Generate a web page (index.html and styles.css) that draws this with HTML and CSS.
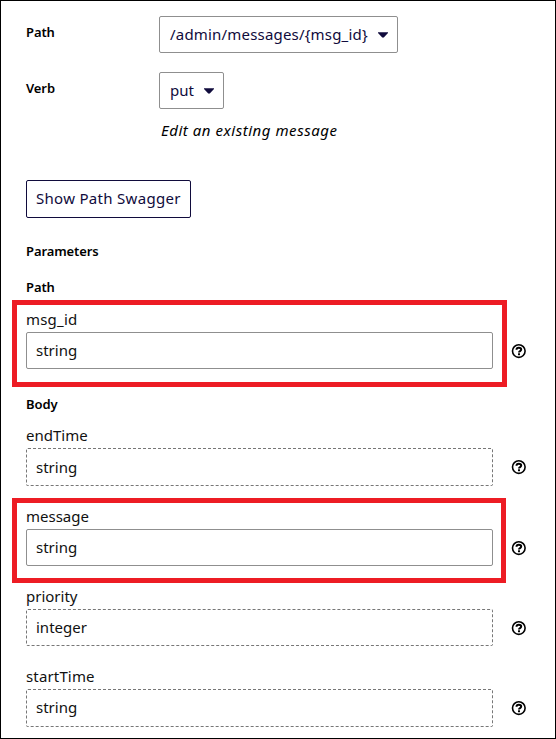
FILE: index.html
```html
<!DOCTYPE html>
<html lang="en">
<head>
<meta charset="utf-8">
<title>Edit message</title>
<link rel="stylesheet" href="styles.css">
</head>
<body>
<svg class="defs" width="0" height="0" aria-hidden="true">
  <symbol id="help" viewBox="0 0 16 16">
    <circle cx="7.8" cy="8.1" r="6.3" fill="none" stroke="currentColor" stroke-width="1.6"/>
    <path d="M5.5 6.8C5.5 5.4 6.5 4.8 7.8 4.8s2.4.6 2.4 1.8c0 1.5-2.2 1.4-2.2 2.9" fill="none" stroke="currentColor" stroke-width="2"/>
    <rect x="7" y="10.3" width="2" height="1.9" fill="currentColor"/>
  </symbol>
  <symbol id="caret" viewBox="0 0 10 6">
    <path d="M0 .3h10v.7L6 5.2q-1 .9-2 0L0 1z" fill="currentColor"/>
  </symbol>
</svg>
<main class="page">
  <div class="row">
    <span class="heading">Path</span>
    <button class="select select-path"><span>/admin/messages/{msg_id}</span><svg class="caret"><use href="#caret"/></svg></button>
  </div>
  <div class="row row-verb">
    <span class="heading">Verb</span>
    <button class="select select-verb"><span>put</span><svg class="caret"><use href="#caret"/></svg></button>
  </div>
  <p class="description">Edit an existing message</p>
  <button class="swagger"><span>Show Path Swagger</span></button>
  <h2 class="heading">Parameters</h2>
  <h3 class="heading heading-path">Path</h3>
  <section class="field required field-id">
    <label class="name name-id">msg_id</label>
    <div class="line"><div class="input">string</div><svg class="help"><use href="#help"/></svg></div>
    <i class="mark mark-id"></i>
  </section>
  <h3 class="heading heading-body">Body</h3>
  <section class="field field-end">
    <label class="name">endTime</label>
    <div class="line"><div class="input tall">string</div><svg class="help"><use href="#help"/></svg></div>
  </section>
  <section class="field required">
    <label class="name">message</label>
    <div class="line"><div class="input">string</div><svg class="help"><use href="#help"/></svg></div>
    <i class="mark mark-message"></i>
  </section>
  <section class="field">
    <label class="name">priority</label>
    <div class="line"><div class="input">integer</div><svg class="help"><use href="#help"/></svg></div>
  </section>
  <section class="field field-start">
    <label class="name name-start">startTime</label>
    <div class="line"><div class="input tall">string</div><svg class="help"><use href="#help"/></svg></div>
  </section>
</main>
</body>
</html>
```
FILE: styles.css
```css
* { box-sizing: border-box; }
body { margin: 0; background: #fff; }
.defs { position: absolute; }
.page {
  width: 556px;
  height: 739px;
  border: 1px solid #000;
  padding: 15px 25px 0;
  overflow: hidden;
  font: 15px/20px "Noto Sans", sans-serif;
  color: #111;
}
.row { display: flex; height: 37px; }
.row-verb { margin-top: 19px; }
.row .heading { width: 133px; padding-top: 6px; }
.heading {
  margin: 0;
  font-size: 13px;
  font-weight: 600;
  line-height: 20px;
  letter-spacing: -0.1px;
  color: #000;
}
.select {
  display: flex;
  align-items: center;
  justify-content: space-between;
  height: 37px;
  padding: 0 9px 0 10px;
  border: 1px solid #8f8f8f;
  border-radius: 2px;
  background: #fff;
  font: inherit;
  color: #100b3c;
}
.select span { padding-bottom: 2px; }
.select-path { width: 239px; letter-spacing: 0.19px; }
.select-verb { width: 65px; }
.caret { width: 10px; height: 6px; }
.description {
  margin: 11px 0 0 135px;
  font-style: italic;
  letter-spacing: 0.53px;
  color: #000;
}
.swagger {
  display: block;
  width: 165px;
  height: 38px;
  margin: 40px 0 23px;
  padding: 0 9px 2px;
  border: 1px solid #100b3c;
  border-radius: 2px;
  background: #fff;
  font: inherit;
  letter-spacing: 0.3px;
  text-align: left;
  white-space: nowrap;
  color: #100b3c;
}
.heading-path { margin-top: 16px; }
.heading-body { margin-top: 25px; }
.field { position: relative; margin-top: 19px; }
.field-id { margin-top: 11px; }
.field-end { margin-top: 10px; }
.name { display: block; height: 24px; line-height: 23px; }
.name-id { letter-spacing: 0.2px; }
.name-start { letter-spacing: 0.15px; }
.line { display: flex; align-items: center; gap: 18px; }
.input {
  width: 467px;
  height: 37px;
  padding: 0 9px;
  border: 1px dashed #777;
  border-radius: 2px;
  line-height: 35px;
}
.tall { height: 38px; line-height: 36px; }
.field-start .input { line-height: 34px; }
.required .input { border: 1px solid #8f8f8f; }
.help { width: 16px; height: 16px; color: #000; }
.mark { position: absolute; left: -14px; border: 5px solid #ed1c24; }
.mark-id { top: -8px; width: 495px; height: 87px; }
.mark-message { top: -7px; width: 494px; height: 85px; }
```
